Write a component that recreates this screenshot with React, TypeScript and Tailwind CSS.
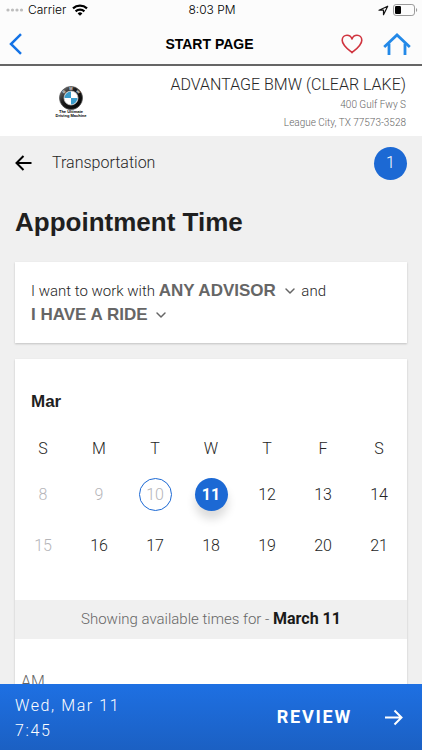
import { ChevronDown } from "lucide-react";

interface Day {
  date: number;
  disabled?: boolean;
  today?: boolean;
}

const weekdays = ["S", "M", "T", "W", "T", "F", "S"];

const weeks: Day[][] = [
  [
    { date: 8, disabled: true },
    { date: 9, disabled: true },
    { date: 10, disabled: true, today: true },
    { date: 11 },
    { date: 12 },
    { date: 13 },
    { date: 14 },
  ],
  [
    { date: 15, disabled: true },
    { date: 16 },
    { date: 17 },
    { date: 18 },
    { date: 19 },
    { date: 20 },
    { date: 21 },
  ],
];

const selectedDate = 11;

function dayClass(day: Day): string {
  if (day.date === selectedDate) {
    return "bg-[#1c69d4] font-bold text-white shadow-[0_8px_10px_rgba(0,0,0,0.14)]";
  }
  if (day.today) return "border border-[#1c69d4] text-[#b5b5b9]";
  if (day.disabled) return "text-[#b5b5b9]";
  return "text-[#262626]";
}

function StatusBar() {
  return (
    <div className="grid h-5 grid-cols-3 items-center pr-1 pl-1.5 font-['Inter','Liberation_Sans',sans-serif] text-xs text-black">
      <div className="flex items-center gap-1">
        <svg width="18" height="4" viewBox="0 0 18 4" fill="#bdbdbd">
          <circle cx="2" cy="2" r="1.6" />
          <circle cx="6.5" cy="2" r="1.6" />
          <circle cx="11" cy="2" r="1.6" />
          <circle cx="15.5" cy="2" r="1.6" />
        </svg>
        <span>Carrier</span>
        <svg className="ml-0.5" width="16" height="12" viewBox="0 0 16 12" fill="none" stroke="#000" strokeWidth="2.2">
          <path d="M1 4.4a10.2 10.2 0 0 1 14 0" />
          <path d="M3.6 7.4a6.5 6.5 0 0 1 8.8 0" />
          <path d="M8 11.8 5.6 9.5a3.5 3.5 0 0 1 4.8 0Z" fill="#000" stroke="none" />
        </svg>
      </div>
      <span className="text-center">8:03 PM</span>
      <div className="flex items-center justify-end gap-1">
        <svg width="11" height="11" viewBox="0 0 11 11" fill="none" stroke="#111" strokeWidth="1.2" strokeLinejoin="round">
          <path d="M9.7 1.2 1 5.2h4.5v4.5Z" />
        </svg>
        <svg width="25" height="12" viewBox="0 0 25 12">
          <rect x="0.5" y="0.5" width="21" height="11" rx="2.6" fill="none" stroke="#9a9a9a" />
          <rect x="2" y="2" width="6" height="8" rx="1.2" fill="#000" />
          <path d="M23 4v4c1.6-.6 1.6-3.4 0-4Z" fill="#9a9a9a" />
        </svg>
      </div>
    </div>
  );
}

function NavBar() {
  return (
    <nav className="grid h-11 grid-cols-3 items-center pt-[3px] pr-[11px] pl-2">
      <button type="button" aria-label="Back" className="justify-self-start">
        <svg width="15" height="22" viewBox="0 0 15 22" fill="none" stroke="#1473e6" strokeWidth="2.5">
          <path d="M13 1.2 3 11l10 9.8" />
        </svg>
      </button>
      <h1 className="text-center font-['Liberation_Sans',Arial,sans-serif] text-sm font-bold whitespace-nowrap text-black">
        START PAGE
      </h1>
      <div className="flex items-center gap-5 justify-self-end">
        <button type="button" aria-label="Favorites">
          <svg width="22" height="20" viewBox="0 0 22 20" fill="none" stroke="#d0343f" strokeWidth="1.6" strokeLinejoin="round">
            <path d="M11 18.6C8.6 16.4 1.2 11.5 1.2 6.2 1.2 3.2 3.4 1.2 6 1.2c2.4 0 4.2 1.4 5 3.7.8-2.3 2.6-3.7 5-3.7 2.6 0 4.8 2 4.8 5 0 5.3-7.4 10.2-9.8 12.4Z" />
          </svg>
        </button>
        <button type="button" aria-label="Home">
          <svg width="28" height="22" viewBox="0 0 28 22" fill="none" stroke="#2389e8" strokeWidth="2.8">
            <path d="M1.2 14 14 2l12.8 12" />
            <path d="M6 10.5V22M22 10.5V22" />
          </svg>
        </button>
      </div>
    </nav>
  );
}

function DealerLogo() {
  return (
    <div className="flex w-[110px] flex-col items-center pt-0.5">
      <svg width="24" height="24" viewBox="0 0 48 48">
        <defs>
          <linearGradient id="ring" x1="0" y1="0" x2="1" y2="1">
            <stop offset="0" stopColor="#8d8d8d" />
            <stop offset="0.4" stopColor="#1b1b1b" />
            <stop offset="1" stopColor="#000" />
          </linearGradient>
        </defs>
        <circle cx="24" cy="24" r="23" fill="url(#ring)" stroke="#555" strokeWidth="1.5" />
        <circle cx="24" cy="24" r="14" fill="#fff" stroke="#ccc" strokeWidth="1.5" />
        <path d="M24 24V11A13 13 0 0 0 11 24Z" fill="#3b9ccb" />
        <path d="M24 24v13A13 13 0 0 0 37 24Z" fill="#3b9ccb" />
        <g fill="#ddd" fontFamily="Liberation Sans" fontSize="8" fontWeight="700" textAnchor="middle">
          <text x="24" y="8">M</text>
          <text x="11.5" y="13.5" transform="rotate(-42 11.5 13.5)">B</text>
          <text x="36.5" y="13.5" transform="rotate(42 36.5 13.5)">W</text>
        </g>
      </svg>
      <p className="text-center font-['Liberation_Sans',Arial,sans-serif] text-[4px] leading-[4px] font-bold text-black">
        The Ultimate
        <br />
        Driving Machine
      </p>
    </div>
  );
}

function InlineSelect({ id, label, value }: { id: string; label: string; value: string }) {
  return (
    <span className="relative inline-flex items-center">
      <label htmlFor={id} className="sr-only">
        {label}
      </label>
      <select
        id={id}
        className="h-6 appearance-none bg-transparent pr-5 font-['Liberation_Sans',Arial,sans-serif] text-[17px] leading-6 font-bold text-[#666]"
      >
        <option>{value}</option>
      </select>
      <ChevronDown className="pointer-events-none absolute right-0 size-4 text-[#666]" strokeWidth={2.2} />
    </span>
  );
}

function Calendar() {
  return (
    <table className="w-full table-fixed text-center">
      <thead>
        <tr className="h-10">
          {weekdays.map((name, i) => (
            <th key={i} scope="col" className="p-0 text-center font-light text-[#262626]">
              {name}
            </th>
          ))}
        </tr>
      </thead>
      <tbody>
        {weeks.map((week) => (
          <tr key={week[0].date} className="h-[51px]">
            {week.map((day) => (
              <td key={day.date} className="p-0">
                <button
                  type="button"
                  disabled={day.disabled}
                  className={`mx-auto flex size-[33px] items-center justify-center rounded-full ${dayClass(day)}`}
                >
                  {day.date}
                </button>
              </td>
            ))}
          </tr>
        ))}
      </tbody>
    </table>
  );
}

export default function App() {
  return (
    <div className="flex h-screen flex-col bg-[#f0f0f0] font-['Roboto','Liberation_Sans',sans-serif] text-base font-light text-[#262626]">
      <header className="shrink-0 border-b-2 border-[#666] bg-[#fcfcfc]">
        <StatusBar />
        <NavBar />
      </header>

      <section className="flex h-[70px] shrink-0 items-center justify-between bg-white px-4">
        <DealerLogo />
        <div className="pt-1 text-right">
          <h2 className="leading-[22px] text-[#262626]">ADVANTAGE BMW (CLEAR LAKE)</h2>
          <p className="text-[10px] leading-[18px] text-[#666]">400 Gulf Fwy S</p>
          <p className="text-[10px] leading-[18px] text-[#666]">League City, TX 77573-3528</p>
        </div>
      </section>

      <main className="min-h-0 flex-1 overflow-y-auto px-[15px] [scrollbar-width:none]">
        <div className="flex h-[54px] items-center">
          <button type="button" className="flex items-center gap-5">
            <svg width="17" height="16" viewBox="0 0 17 16" fill="none" stroke="#000" strokeWidth="2">
              <path d="M8.5 1 1.5 8l7 7M1.5 8H16.5" />
            </svg>
            Transportation
          </button>
          <span className="ml-auto flex size-[33px] items-center justify-center rounded-full bg-[#1c69d4] text-white">
            1
          </span>
        </div>

        <h2 className="mt-4 font-['Liberation_Sans',Arial,sans-serif] text-[26px] leading-8 font-bold text-[#1f1f1f]">
          Appointment Time
        </h2>

        <section className="mt-6 bg-white px-4 pt-[17px] pb-4 text-[15px] leading-6 shadow-[0_1px_2px_rgba(0,0,0,0.2)]">
          I want to work with <InlineSelect id="advisor" label="Advisor" value="ANY ADVISOR" /> and{" "}
          <InlineSelect id="ride" label="Transportation" value="I HAVE A RIDE" />
        </section>

        <section className="mt-4 bg-white shadow-[0_1px_2px_rgba(0,0,0,0.2)]">
          <h3 className="px-4 pt-[31px] pb-[15px] font-['Liberation_Sans',Arial,sans-serif] text-[17px] leading-6 font-bold text-[#1f1f1f]">
            Mar
          </h3>
          <Calendar />
          <p className="mt-[29px] bg-[#f0f0f0] text-center text-[15px] leading-[39px] text-[#666]">
            Showing available times for -{" "}
            <strong className="text-base leading-none font-bold text-[#1a1a1a]">March 11</strong>
          </p>
          <h4 className="px-1.5 pt-[31px] pb-10 leading-6 text-[#666]">AM</h4>
        </section>
      </main>

      <footer className="flex h-[66px] shrink-0 items-center justify-between bg-linear-to-b from-[#1e70e3] to-[#1b60c3] pr-[18px] pl-[15px] text-white">
        <p className="pt-px leading-[25px] tracking-widest">
          Wed, Mar 11
          <br />
          7:45
        </p>
        <button type="button" className="flex items-center gap-8 text-lg font-bold tracking-widest">
          REVIEW
          <svg width="20" height="17" viewBox="0 0 20 17" fill="none" stroke="#fff" strokeWidth="2">
            <path d="M1 8.5h16M10.5 1.5l7 7-7 7" />
          </svg>
        </button>
      </footer>
    </div>
  );
}
